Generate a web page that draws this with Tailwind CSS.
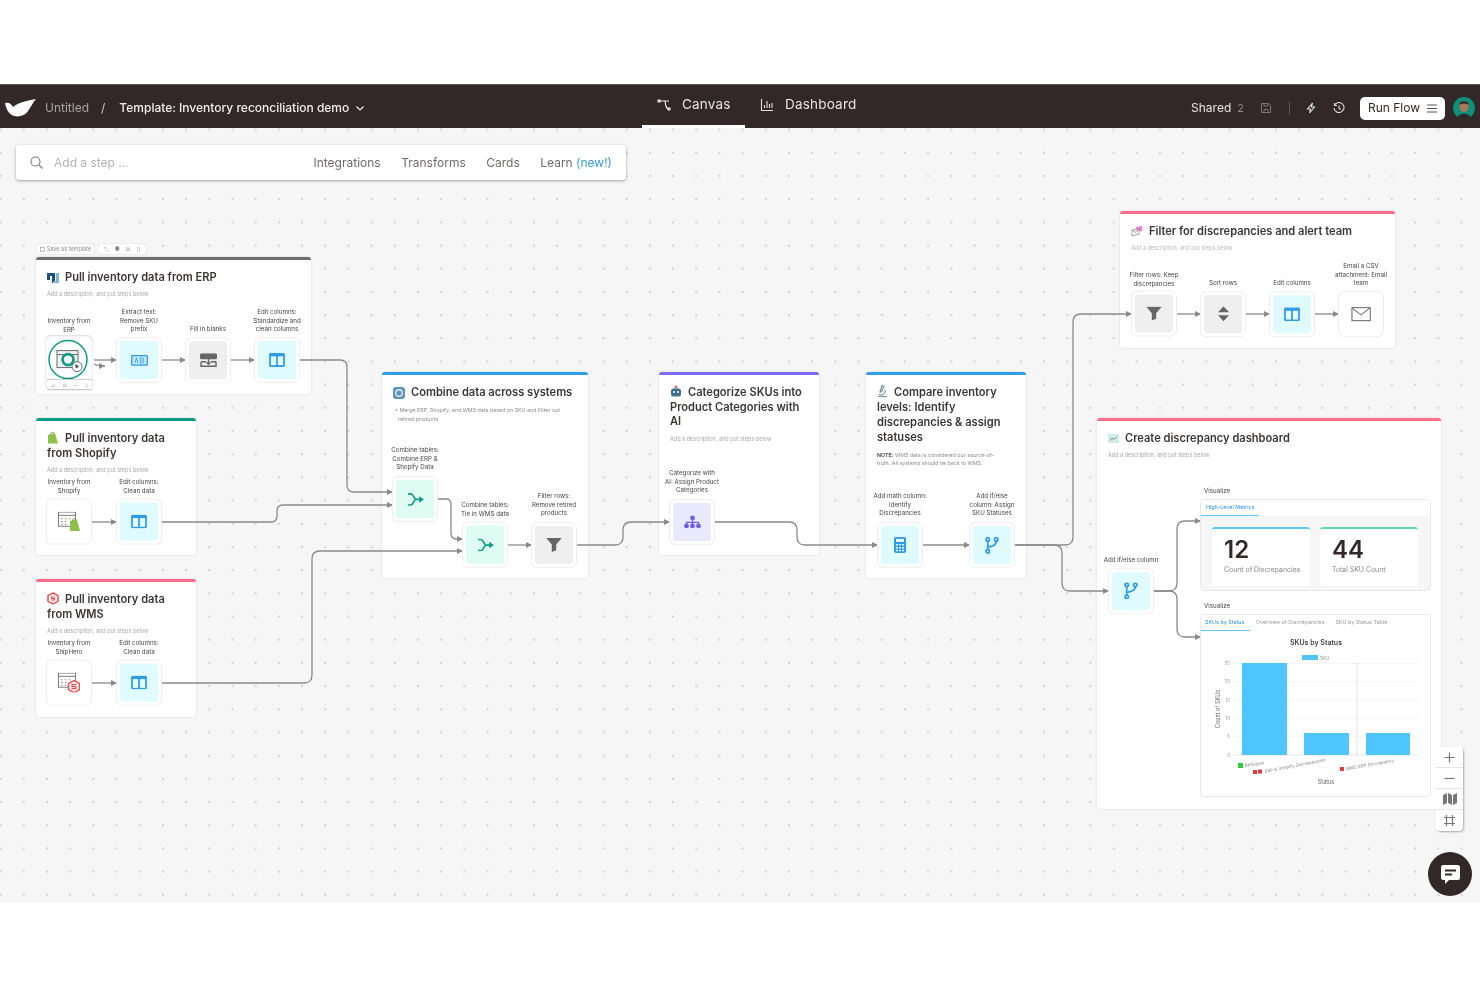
<!DOCTYPE html>
<html lang="en">
<head>
  <meta charset="UTF-8" />
  <meta name="viewport" content="width=device-width, initial-scale=1.0" />
  <title>Template: Inventory reconciliation demo</title>
  <script src="https://cdn.jsdelivr.net/npm/@tailwindcss/browser@4"></script>
</head>
<body class="bg-white font-[Inter,sans-serif] text-[#3d3535] overflow-hidden">
  <!-- shared icons -->
  <svg class="absolute w-0 h-0">
    <symbol id="cols" viewBox="0 0 18 16"><rect width="18" height="16" rx="2" fill="#2f9be6"/><rect x="2" y="4" width="6" height="10" fill="#e4fbff"/><rect x="10" y="4" width="6" height="10" fill="#e4fbff"/></symbol>
    <symbol id="funnel" viewBox="0 0 18 16"><path d="M0 0H18L11.5 7.5V14L6.5 16V7.5z" fill="#666"/></symbol>
    <symbol id="branch" viewBox="0 0 16 20"><g fill="none" stroke="#2f9be6" stroke-width="2"><circle cx="3" cy="3" r="2"/><circle cx="13" cy="3" r="2"/><circle cx="3" cy="17" r="2"/><path d="M3 5V15M13 5C13 10 8 11 3 12"/></g></symbol>
    <symbol id="merge" viewBox="0 0 18 14"><path d="M1 1H4C7 1 7 7 10 7H14M1 13H4C7 13 7 7 10 7" fill="none" stroke="#0d9b83" stroke-width="1.8"/><path d="M13 3.5L18 7L13 10.5z" fill="#0d9b83"/></symbol>
    <symbol id="sheet" viewBox="0 0 20 18"><g fill="none" stroke="#777" stroke-width="1"><rect x=".5" y=".5" width="18" height="15"/><path d="M.5 4H18.5"/></g><path d="M3 7h2v1H3zM7 7h2v1H7zM11 7h2v1h-2zM3 10h2v1H3zM7 10h2v1H7zM3 13h2v1H3zM7 13h2v1H7z" fill="#999"/></symbol>
  </svg>

  <div class="h-[84px] bg-white"></div>

  <!-- top bar -->
  <header class="h-[44px] bg-[#322828] relative flex items-center justify-between pl-[5px] pr-[5px] pt-[3px] border-t border-[#555] blur-[0.3px]">
    <div class="flex items-center w-[400px]">
      <svg class="w-[31px] h-[18px]" viewBox="0 0 31 18"><path d="M0 4C3 3 6 4 8 8C11 5 16 3 31 0C28 3 26 8 23 12C20 17 12 19 7 16C3 14 1 9 0 4z" fill="#fff"/></svg>
      <span class="ml-[9px] text-[12px] text-[#a8a3a3]">Untitled</span>
      <span class="ml-[12px] text-[12px] text-[#cfcaca]">/</span>
      <span class="ml-[14px] text-[12px] font-medium text-[#f1eeee] whitespace-nowrap">Template: Inventory reconciliation demo</span>
      <svg class="ml-[6px] w-[10px] h-[10px] shrink-0" viewBox="0 0 10 10"><path d="M1.5 3.5L5 7L8.5 3.5" fill="none" stroke="#eee" stroke-width="1.2"/></svg>
    </div>
    <nav class="absolute left-[642px] top-0 h-[43px] flex text-[13.5px] text-[#e8e4e4] tracking-[.2px]">
      <div class="w-[103px] h-full border-b-[3px] border-white flex items-center pl-[15px] gap-[11px] pb-[1px]">
        <svg class="w-[14px] h-[14px]" viewBox="0 0 14 14"><g fill="none" stroke="#eee" stroke-width="1.2"><path d="M2 3H7C9 3 8 6 9 8C9.5 10 10 11 12 11M7 3H12"/><circle cx="2" cy="3" r="1.2"/><circle cx="12" cy="11" r="1.2"/></g></svg>
        <span>Canvas</span>
      </div>
      <div class="flex items-center h-full pl-[15px] gap-[11px] pb-[4px]">
        <svg class="w-[14px] h-[14px]" viewBox="0 0 14 14"><path d="M1.5 1V12.5H13M4.5 10V7M7 10V3M9.5 10V6M12 10V5" fill="none" stroke="#ddd" stroke-width="1.1"/></svg>
        <span>Dashboard</span>
      </div>
    </nav>
    <div class="flex items-center text-[12px]">
      <span class="text-[#e8e4e4]">Shared</span>
      <span class="ml-[6px] text-[11px] text-[#8f8a8a]">2</span>
      <svg class="ml-[16px] w-[12px] h-[12px]" viewBox="0 0 12 12"><path d="M1.5 1.5H8.5L10.5 3.5V10.5H1.5zM4 1.5V4H8V1.5M4 10.5V7.5H8V10.5" fill="none" stroke="#777" stroke-width="1"/></svg>
      <span class="ml-[17px] w-px h-[13px] bg-[#5f5656]"></span>
      <svg class="ml-[15px] w-[12px] h-[12px]" viewBox="0 0 12 12"><path d="M7.5 1L2.5 7H5.5L4.5 11L9.5 5H6.5z" fill="none" stroke="#ddd" stroke-width="1.1"/></svg>
      <svg class="ml-[16px] w-[12px] h-[12px]" viewBox="0 0 12 12"><path d="M2 2.5A5 5 0 1 1 1 6M1.5 1V3.5H4M6 3.5V6.5L8 7.5" fill="none" stroke="#ddd" stroke-width="1.1"/></svg>
      <button class="ml-[15px] w-[85px] h-[23px] bg-white rounded-[5px] flex items-center justify-center gap-[7px] text-[#322828] text-[12px]">
        Run Flow
        <svg class="w-[10px] h-[9px]" viewBox="0 0 10 9"><path d="M0 1H10M0 4.5H10M0 8H10" stroke="#555" stroke-width="1"/></svg>
      </button>
      <svg class="ml-[8px] w-[22px] h-[22px]" viewBox="0 0 22 22"><circle cx="11" cy="11" r="11" fill="#0e8f7a"/><ellipse cx="11" cy="9.5" rx="4.5" ry="5.5" fill="#a9775c"/><path d="M6.5 8C6 3 16 3 15.5 8C13 6 9 6 6.5 8z" fill="#2a2320"/><path d="M4 22C5 15 17 15 18 22z" fill="#2b2b2b"/></svg>
    </div>
  </header>

  <!-- canvas -->
  <main class="relative h-[775px] overflow-hidden bg-[#f6f6f6] bg-[radial-gradient(circle,#d2d2d2_0.7px,transparent_1px)] bg-[size:23.2px_23.2px] bg-[position:-11px_-10px] blur-[0.3px]">

    <!-- add step bar -->
    <div class="absolute left-[16px] top-[17px] w-[610px] h-[35px] bg-white rounded-[3px] shadow-[0_1px_3px_rgba(0,0,0,.35)] flex items-center pl-[14px] pr-[14px] text-[12px] text-[#6f6a6a]">
      <svg class="w-[13px] h-[13px]" viewBox="0 0 13 13"><circle cx="5.5" cy="5.5" r="4.5" fill="none" stroke="#777" stroke-width="1.1"/><path d="M9 9L12.5 12.5" stroke="#777" stroke-width="1.1"/></svg>
      <span class="ml-[11px] text-[#b5b1b1]">Add a step ...</span>
      <div class="ml-auto flex gap-[20.5px]">
        <span>Integrations</span><span>Transforms</span><span>Cards</span>
        <span>Learn <span class="text-[#3b98dc]">(new!)</span></span>
      </div>
    </div>

    <!-- card toolbar -->
    <div class="absolute left-[37px] top-[116px] flex gap-[4px] text-[5.5px] text-[#8f8a8a]">
      <div class="h-[10px] w-[57px] bg-white rounded-[2px] shadow-[0_0_1px_rgba(0,0,0,.4)] flex items-center justify-center gap-[2px]">
        <svg class="w-[5px] h-[5px]" viewBox="0 0 5 5"><rect x=".4" y=".4" width="4.2" height="4.2" fill="none" stroke="#999" stroke-width=".6"/></svg>
        Save as template</div>
      <div class="h-[10px] w-[48px] bg-white rounded-[2px] shadow-[0_0_1px_rgba(0,0,0,.4)] flex items-center justify-around px-[3px]"><span>⤡</span><span>●</span><span>⧉</span><span>▯</span></div>
    </div>

    <!-- step cards -->
    <section class="absolute left-[36px] top-[129px] w-[275px] h-[137px] bg-white rounded-[3px] border-t-[3.5px] border-[#6e6e6e] shadow-[0_0_2px_rgba(0,0,0,.15)] px-[11px] pt-[10px]">
      <h3 class="text-[11.1px] leading-[15px] font-semibold flex items-center gap-[6px]">
        <svg class="w-[12px] h-[12px]" viewBox="0 0 12 12"><path d="M0 1H8V11H5V4H3V8H0z" fill="#1c4f7a"/><path d="M9 1H12V11H6V9H9z" fill="#7fb2d6"/></svg>
        Pull inventory data from ERP</h3>
      <p class="mt-[5px] text-[5.5px] leading-[8px] text-[#aaa]">Add a description, and put steps below</p>
    </section>

    <section class="absolute left-[36px] top-[290px] w-[160px] h-[137px] bg-white rounded-[3px] border-t-[3.5px] border-[#0d9b83] shadow-[0_0_2px_rgba(0,0,0,.15)] px-[11px] pt-[10px]">
      <h3 class="text-[11.1px] leading-[14.7px] font-semibold">
        <svg class="inline w-[12px] h-[13px] mr-[6px] align-[-2px]" viewBox="0 0 12 13"><path d="M1 4L8 2.5L11 12.5L1 12.5z" fill="#8dbf4b"/><path d="M3.5 4C3.5 1 7 0 7.5 3.5" fill="none" stroke="#6b9a38"/></svg>Pull inventory data from Shopify</h3>
      <p class="mt-[6px] text-[5.5px] leading-[8px] text-[#aaa]">Add a description, and put steps below</p>
    </section>

    <section class="absolute left-[36px] top-[451px] w-[160px] h-[138px] bg-white rounded-[3px] border-t-[3.5px] border-[#ff6b8a] shadow-[0_0_2px_rgba(0,0,0,.15)] px-[11px] pt-[10px]">
      <h3 class="text-[11.1px] leading-[14.7px] font-semibold">
        <svg class="inline w-[12px] h-[13px] mr-[6px] align-[-2px]" viewBox="0 0 12 13"><path d="M6 1L11 3.7V9.3L6 12L1 9.3V3.7z" fill="none" stroke="#ef4d4d" stroke-width="1.5"/><path d="M8 5H4.5V6.5H7.5V8H4" fill="none" stroke="#ef4d4d" stroke-width="1.1"/></svg>Pull inventory data from WMS</h3>
      <p class="mt-[6px] text-[5.5px] leading-[8px] text-[#aaa]">Add a description, and put steps below</p>
    </section>

    <section class="absolute left-[382px] top-[244px] w-[206px] h-[206px] bg-white rounded-[3px] border-t-[3.5px] border-[#2f9fe8] shadow-[0_0_2px_rgba(0,0,0,.15)] px-[11px] pt-[10px]">
      <h3 class="text-[11.1px] leading-[15px] font-semibold flex items-center gap-[6px]">
        <svg class="w-[12px] h-[12px]" viewBox="0 0 12 12"><rect width="12" height="12" rx="3" fill="#5f93b8"/><circle cx="6" cy="6" r="3.3" fill="none" stroke="#dcecf6" stroke-width="1.4"/></svg>
        Combine data across systems</h3>
      <p class="mt-[6px] pl-[2px] text-[5.3px] leading-[8.5px] text-[#8f8a8a] whitespace-nowrap">• Merge ERP, Shopify, and WMS data based on SKU and Filter out<br><span class="pl-[3px]">retired products</span></p>
    </section>

    <section class="absolute left-[659px] top-[244px] w-[160px] h-[183px] bg-white rounded-[3px] border-t-[3.5px] border-[#7c6cf0] shadow-[0_0_2px_rgba(0,0,0,.15)] px-[11px] pt-[10px]">
      <h3 class="text-[11.1px] leading-[14.7px] font-semibold">
        <svg class="inline w-[12px] h-[12px] mr-[6px] align-[-1px]" viewBox="0 0 12 12"><circle cx="6" cy="2" r="1.5" fill="#e0685a"/><rect x="1" y="3.5" width="10" height="8" rx="2.5" fill="#3f6f8c"/><circle cx="4" cy="7" r="1" fill="#fff"/><circle cx="8" cy="7" r="1" fill="#fff"/></svg>Categorize SKUs into Product Categories with AI</h3>
      <p class="mt-[6px] text-[5.5px] leading-[8px] text-[#aaa]">Add a description, and put steps below</p>
    </section>

    <section class="absolute left-[866px] top-[244px] w-[160px] h-[206px] bg-white rounded-[3px] border-t-[3.5px] border-[#2f9fe8] shadow-[0_0_2px_rgba(0,0,0,.15)] px-[11px] pt-[10px]">
      <h3 class="text-[11.1px] leading-[14.9px] font-semibold">
        <svg class="inline w-[11px] h-[12px] mr-[6px] align-[-1px]" viewBox="0 0 11 12"><path d="M5 .5L7 1.5L4.5 7H3zM1 11.5H10M2 9.5C4 10.5 9 10 8 5" fill="none" stroke="#7d8f9c" stroke-width="1.2"/></svg>Compare inventory levels: Identify discrepancies &amp; assign statuses</h3>
      <p class="mt-[6px] text-[5.3px] leading-[8.5px] text-[#8f8a8a] whitespace-nowrap"><b class="font-bold text-[#555]">NOTE:</b> WMS data is considered our source-of-<br>truth. All systems should tie back to WMS.</p>
    </section>

    <section class="absolute left-[1120px] top-[83px] w-[275px] h-[137px] bg-white rounded-[3px] border-t-[3.5px] border-[#ff6b8a] shadow-[0_0_2px_rgba(0,0,0,.15)] px-[11px] pt-[10px]">
      <h3 class="text-[11.1px] leading-[15px] font-semibold flex items-center gap-[6px]">
        <svg class="w-[12px] h-[11px]" viewBox="0 0 12 11"><path d="M5 1L11 0V5L6 6z" fill="#ff7ed4"/><path d="M1 4L8 2.5V8L1 10zM1 4L5 6.5L8 2.5" fill="#fff" stroke="#8a8a8a" stroke-width=".8"/></svg>
        Filter for discrepancies and alert team</h3>
      <p class="mt-[5px] text-[5.5px] leading-[8px] text-[#bbb]">Add a description, and put steps below</p>
    </section>

    <section class="absolute left-[1097px] top-[290px] w-[344px] h-[391px] bg-white rounded-[3px] border-t-[3.5px] border-[#ff6b8a] shadow-[0_0_2px_rgba(0,0,0,.15)] px-[11px] pt-[10px]">
      <h3 class="text-[11.1px] leading-[15px] font-semibold flex items-center gap-[6px]">
        <svg class="w-[11px] h-[9px]" viewBox="0 0 11 9"><rect width="11" height="9" fill="#cfeee8"/><path d="M2 6.5L4 4L6 5.5L9 2.5" fill="none" stroke="#777" stroke-width=".8"/></svg>
        Create discrepancy dashboard</h3>
      <p class="mt-[5px] text-[5.5px] leading-[8px] text-[#aaa]">Add a description, and put steps below</p>
    </section>

    <!-- connectors -->
    <svg class="absolute left-0 top-0 w-[1480px] h-[775px]" viewBox="0 0 1480 775" fill="none" stroke="#8a8a8a" stroke-width="1.3">
      <defs>
        <marker id="arrow" viewBox="0 0 6 6" refX="6" refY="3" markerWidth="6" markerHeight="6" markerUnits="userSpaceOnUse" orient="auto"><path d="M0 0L6 3L0 6z" fill="#8a8a8a" stroke="none"/></marker>
      </defs>
      <path marker-end="url(#arrow)" d="M300 232H340Q347 232 347 239V357Q347 364 354 364H393"/>
      <path marker-end="url(#arrow)" d="M162 394H271Q277 394 277 388V383Q277 377 283 377H393"/>
      <path marker-end="url(#arrow)" d="M162 555H304Q312 555 312 547V431Q312 423 320 423H463"/>
      <path marker-end="url(#arrow)" d="M438 371H446Q451 371 451 376V405Q451 411 456 411H463"/>
      <path marker-end="url(#arrow)" d="M508 417H532"/>
      <path marker-end="url(#arrow)" d="M577 417H615Q623 417 623 409V402Q623 394 631 394H670"/>
      <path marker-end="url(#arrow)" d="M715 394H789Q797 394 797 402V409Q797 417 805 417H878"/>
      <path marker-end="url(#arrow)" d="M923 417H970"/>
      <path marker-end="url(#arrow)" d="M1015 417H1065Q1073 417 1073 409V194Q1073 186 1081 186H1132"/>
      <path marker-end="url(#arrow)" d="M1015 417H1054Q1062 417 1062 425V455Q1062 463 1070 463H1109"/>
      <path marker-end="url(#arrow)" d="M1154 463H1169Q1177 463 1177 455V401Q1177 393 1185 393H1201"/>
      <path marker-end="url(#arrow)" d="M1154 463H1169Q1177 463 1177 471V501Q1177 509 1185 509H1201"/>
      <path marker-end="url(#arrow)" d="M94 232H117"/>
      <path marker-end="url(#arrow)" d="M94 236Q98 238 105 238"/>
      <path marker-end="url(#arrow)" d="M162 232H186"/>
      <path marker-end="url(#arrow)" d="M231 232H255"/>
      <path marker-end="url(#arrow)" d="M92 394H117"/>
      <path marker-end="url(#arrow)" d="M92 555H117"/>
      <path marker-end="url(#arrow)" d="M1177 186H1201"/>
      <path marker-end="url(#arrow)" d="M1246 186H1270"/>
      <path marker-end="url(#arrow)" d="M1315 186H1339"/>
    </svg>

    <!-- nodes: top is the bottom edge of the tile -->
    <div class="absolute left-[34px] top-[262px] -translate-y-full w-[70px] flex flex-col items-center text-center text-[6.2px] leading-[8.7px] text-[#444] whitespace-nowrap">
      <span class="mb-[2px]">Inventory from<br>ERP</span>
      <div class="relative w-[48px] h-[54px] bg-white rounded-[6px] border border-[#eee] shadow-[0_0_1px_rgba(0,0,0,.15)]">
        <svg class="absolute left-[1px] top-[2px] w-[42px] h-[42px]" viewBox="0 0 42 42">
          <circle cx="21" cy="21" r="19" fill="#fff" stroke="#0d9b83" stroke-width="1.5"/>
          <rect x="10" y="12" width="21" height="17" fill="#f3f3f3" stroke="#666"/>
          <path d="M10 16H31" stroke="#666"/>
          <circle cx="30" cy="28" r="5" fill="#fff" stroke="#666"/>
          <path d="M28 25.5L32 28L29 30z" fill="#444"/>
          <circle cx="21" cy="21" r="5.5" fill="none" stroke="#0d9b83" stroke-width="2.6"/>
        </svg>
        <div class="absolute left-[1px] bottom-[-1px] w-[45px] h-[10px] bg-white rounded-[2px] shadow-[0_0_1px_rgba(0,0,0,.4)] flex justify-around items-center text-[5px] text-[#999]"><span>▱</span><span>⧉</span><span>⌁</span><span>▯</span></div>
      </div>
    </div>

    <div class="absolute left-[104px] top-[255px] -translate-y-full w-[70px] flex flex-col items-center text-center text-[6.2px] leading-[8.7px] text-[#444] whitespace-nowrap">
      <span class="mb-[3px]">Extract text:<br>Remove SKU<br>prefix</span>
      <div class="w-[46px] h-[46px] bg-white rounded-[6px] border border-[#eee] p-[3px]"><div class="w-full h-full bg-[#e0fbff] rounded-[3px] flex items-center justify-center">
        <svg class="w-[17px] h-[11px]" viewBox="0 0 17 11"><rect x=".7" y=".7" width="15.6" height="9.6" rx="1" fill="#bfe9fb" stroke="#2f9be6" stroke-width="1.3"/><path d="M4 8L5.5 3L7 8M9.5 3V8H12C13 8 13 5.5 11.5 5.5C13 5.5 13 3 11.5 3z" fill="none" stroke="#2f9be6" stroke-width=".8"/></svg>
      </div></div>
    </div>

    <div class="absolute left-[173px] top-[255px] -translate-y-full w-[70px] flex flex-col items-center text-center text-[6.2px] leading-[8.7px] text-[#444] whitespace-nowrap">
      <span class="mb-[3px]">Fill in blanks</span>
      <div class="w-[46px] h-[46px] bg-white rounded-[6px] border border-[#eee] p-[3px]"><div class="w-full h-full bg-[#efefef] rounded-[3px] flex items-center justify-center">
        <svg class="w-[17px] h-[14px]" viewBox="0 0 17 14"><rect width="17" height="6" rx="1.5" fill="#666"/><path d="M1 8.5H6M11 8.5H16M1 8.5V13H16V8.5M8.5 5V11M6.5 9L8.5 11L10.5 9" fill="none" stroke="#666" stroke-width="1.4"/></svg>
      </div></div>
    </div>

    <div class="absolute left-[242px] top-[255px] -translate-y-full w-[70px] flex flex-col items-center text-center text-[6.2px] leading-[8.7px] text-[#444] whitespace-nowrap">
      <span class="mb-[3px]">Edit columns:<br>Standardize and<br>clean columns</span>
      <div class="w-[46px] h-[46px] bg-white rounded-[6px] border border-[#eee] p-[3px]"><div class="w-full h-full bg-[#e0fbff] rounded-[3px] flex items-center justify-center"><svg class="w-[16px] h-[14px]"><use href="#cols"/></svg></div></div>
    </div>

    <div class="absolute left-[34px] top-[417px] -translate-y-full w-[70px] flex flex-col items-center text-center text-[6.2px] leading-[8.7px] text-[#444] whitespace-nowrap">
      <span class="mb-[4px]">Inventory from<br>Shopify</span>
      <div class="w-[46px] h-[46px] bg-white rounded-[6px] border border-[#eee] flex items-center justify-center">
        <svg class="w-[22px] h-[20px]" viewBox="0 0 22 20"><use href="#sheet" width="19" height="17"/><path d="M12 9.5L19 8L22 19.5H12z" fill="#8dbf4b"/><path d="M14.5 9.5C14.5 6.5 18 6 18 8.5" fill="none" stroke="#6b9a38"/></svg>
      </div>
    </div>

    <div class="absolute left-[104px] top-[417px] -translate-y-full w-[70px] flex flex-col items-center text-center text-[6.2px] leading-[8.7px] text-[#444] whitespace-nowrap">
      <span class="mb-[4px]">Edit columns:<br>Clean data</span>
      <div class="w-[46px] h-[46px] bg-white rounded-[6px] border border-[#eee] p-[3px]"><div class="w-full h-full bg-[#e0fbff] rounded-[3px] flex items-center justify-center"><svg class="w-[16px] h-[14px]"><use href="#cols"/></svg></div></div>
    </div>

    <div class="absolute left-[34px] top-[578px] -translate-y-full w-[70px] flex flex-col items-center text-center text-[6.2px] leading-[8.7px] text-[#444] whitespace-nowrap">
      <span class="mb-[4px]">Inventory from<br>ShipHero</span>
      <div class="w-[46px] h-[46px] bg-white rounded-[6px] border border-[#eee] flex items-center justify-center">
        <svg class="w-[22px] h-[20px]" viewBox="0 0 22 20"><use href="#sheet" width="19" height="17"/><path d="M16 8L21.5 11V17L16 20L10.5 17V11z" fill="#fff" stroke="#ef4d4d" stroke-width="1.5"/><path d="M18.5 12H14V14H18V16H13.5" fill="none" stroke="#ef4d4d" stroke-width="1.2"/></svg>
      </div>
    </div>

    <div class="absolute left-[104px] top-[578px] -translate-y-full w-[70px] flex flex-col items-center text-center text-[6.2px] leading-[8.7px] text-[#444] whitespace-nowrap">
      <span class="mb-[4px]">Edit columns:<br>Clean data</span>
      <div class="w-[46px] h-[46px] bg-white rounded-[6px] border border-[#eee] p-[3px]"><div class="w-full h-full bg-[#e0fbff] rounded-[3px] flex items-center justify-center"><svg class="w-[16px] h-[14px]"><use href="#cols"/></svg></div></div>
    </div>

    <div class="absolute left-[380px] top-[394px] -translate-y-full w-[70px] flex flex-col items-center text-center text-[6.2px] leading-[8.7px] text-[#444] whitespace-nowrap">
      <span class="mb-[4px]">Combine tables:<br>Combine ERP &amp;<br>Shopify Data</span>
      <div class="w-[46px] h-[46px] bg-white rounded-[6px] border border-[#eee] p-[3px]"><div class="w-full h-full bg-[#defcf2] rounded-[3px] flex items-center justify-center"><svg class="w-[17px] h-[13px]"><use href="#merge"/></svg></div></div>
    </div>

    <div class="absolute left-[450px] top-[440px] -translate-y-full w-[70px] flex flex-col items-center text-center text-[6.2px] leading-[8.7px] text-[#444] whitespace-nowrap">
      <span class="mb-[4px]">Combine tables:<br>Tie in WMS data</span>
      <div class="w-[46px] h-[46px] bg-white rounded-[6px] border border-[#eee] p-[3px]"><div class="w-full h-full bg-[#defcf2] rounded-[3px] flex items-center justify-center"><svg class="w-[17px] h-[13px]"><use href="#merge"/></svg></div></div>
    </div>

    <div class="absolute left-[519px] top-[440px] -translate-y-full w-[70px] flex flex-col items-center text-center text-[6.2px] leading-[8.7px] text-[#444] whitespace-nowrap">
      <span class="mb-[4px]">Filter rows:<br>Remove retired<br>products</span>
      <div class="w-[46px] h-[46px] bg-white rounded-[6px] border border-[#eee] p-[3px]"><div class="w-full h-full bg-[#efefef] rounded-[3px] flex items-center justify-center"><svg class="w-[16px] h-[14px]"><use href="#funnel"/></svg></div></div>
    </div>

    <div class="absolute left-[657px] top-[417px] -translate-y-full w-[70px] flex flex-col items-center text-center text-[6.2px] leading-[8.7px] text-[#444] whitespace-nowrap">
      <span class="mb-[4px]">Categorize with<br>AI: Assign Product<br>Categories</span>
      <div class="w-[46px] h-[46px] bg-white rounded-[6px] border border-[#eee] p-[3px]"><div class="w-full h-full bg-[#eaeaff] rounded-[3px] flex items-center justify-center">
        <svg class="w-[17px] h-[14px]" viewBox="0 0 17 14"><g fill="#6d5fe8"><circle cx="8.5" cy="3" r="2.4"/><circle cx="2.5" cy="11" r="2.4"/><circle cx="8.5" cy="11" r="2.4"/><circle cx="14.5" cy="11" r="2.4"/></g><path d="M8.5 3V11M2.5 11V7.5H14.5V11" fill="none" stroke="#6d5fe8" stroke-width="1.2"/></svg>
      </div></div>
    </div>

    <div class="absolute left-[865px] top-[440px] -translate-y-full w-[70px] flex flex-col items-center text-center text-[6.2px] leading-[8.7px] text-[#444] whitespace-nowrap">
      <span class="mb-[4px]">Add math column:<br>Identify<br>Discrepancies</span>
      <div class="w-[46px] h-[46px] bg-white rounded-[6px] border border-[#eee] p-[3px]"><div class="w-full h-full bg-[#e0fbff] rounded-[3px] flex items-center justify-center">
        <svg class="w-[12px] h-[16px]" viewBox="0 0 12 16"><rect width="12" height="16" rx="2" fill="#2f9be6"/><rect x="2" y="2" width="8" height="3" fill="#e4fbff"/><path d="M2 7h2v1.5H2zM5 7h2v1.5H5zM8 7h2v1.5H8zM2 10h2v1.5H2zM5 10h2v1.5H5zM8 10h2v1.5H8zM2 12.8h2v1.5H2zM5 12.8h2v1.5H5zM8 12.8h2v1.5H8z" fill="#e4fbff"/></svg>
      </div></div>
    </div>

    <div class="absolute left-[957px] top-[440px] -translate-y-full w-[70px] flex flex-col items-center text-center text-[6.2px] leading-[8.7px] text-[#444] whitespace-nowrap">
      <span class="mb-[4px]">Add if/else<br>column: Assign<br>SKU Statuses</span>
      <div class="w-[46px] h-[46px] bg-white rounded-[6px] border border-[#eee] p-[3px]"><div class="w-full h-full bg-[#e0fbff] rounded-[3px] flex items-center justify-center"><svg class="w-[14px] h-[17px]"><use href="#branch"/></svg></div></div>
    </div>

    <div class="absolute left-[1119px] top-[209px] -translate-y-full w-[70px] flex flex-col items-center text-center text-[6.2px] leading-[8.7px] text-[#444] whitespace-nowrap">
      <span class="mb-[3px]">Filter rows: Keep<br>discrepancies</span>
      <div class="w-[46px] h-[46px] bg-white rounded-[6px] border border-[#eee] p-[3px]"><div class="w-full h-full bg-[#efefef] rounded-[3px] flex items-center justify-center"><svg class="w-[16px] h-[14px]"><use href="#funnel"/></svg></div></div>
    </div>

    <div class="absolute left-[1188px] top-[209px] -translate-y-full w-[70px] flex flex-col items-center text-center text-[6.2px] leading-[8.7px] text-[#444] whitespace-nowrap">
      <span class="mb-[3px]">Sort rows</span>
      <div class="w-[46px] h-[46px] bg-white rounded-[6px] border border-[#eee] p-[3px]"><div class="w-full h-full bg-[#efefef] rounded-[3px] flex items-center justify-center">
        <svg class="w-[11px] h-[15px]" viewBox="0 0 11 15"><path d="M5.5 0L11 6H0zM5.5 15L0 9H11z" fill="#666"/></svg>
      </div></div>
    </div>

    <div class="absolute left-[1257px] top-[209px] -translate-y-full w-[70px] flex flex-col items-center text-center text-[6.2px] leading-[8.7px] text-[#444] whitespace-nowrap">
      <span class="mb-[3px]">Edit columns</span>
      <div class="w-[46px] h-[46px] bg-white rounded-[6px] border border-[#eee] p-[3px]"><div class="w-full h-full bg-[#e0fbff] rounded-[3px] flex items-center justify-center"><svg class="w-[16px] h-[14px]"><use href="#cols"/></svg></div></div>
    </div>

    <div class="absolute left-[1326px] top-[209px] -translate-y-full w-[70px] flex flex-col items-center text-center text-[6.2px] leading-[8.7px] text-[#444] whitespace-nowrap">
      <span class="mb-[3px]">Email a CSV<br>attachment: Email<br>team</span>
      <div class="w-[46px] h-[46px] bg-white rounded-[6px] border border-[#eee] flex items-center justify-center">
        <svg class="w-[20px] h-[15px]" viewBox="0 0 20 15"><rect x="0" y="1.5" width="19" height="13" fill="#ffd2f0"/><rect x="1" y=".7" width="18.3" height="13" fill="#fff" stroke="#777" stroke-width="1.1"/><path d="M1 1L10 8L19 1" fill="none" stroke="#777" stroke-width="1.1"/></svg>
      </div>
    </div>

    <div class="absolute left-[1096px] top-[486px] -translate-y-full w-[70px] flex flex-col items-center text-center text-[6.2px] leading-[8.7px] text-[#444] whitespace-nowrap">
      <span class="mb-[3px]">Add if/else column</span>
      <div class="w-[46px] h-[46px] bg-white rounded-[6px] border border-[#eee] p-[3px]"><div class="w-full h-full bg-[#e0fbff] rounded-[3px] flex items-center justify-center"><svg class="w-[14px] h-[17px]"><use href="#branch"/></svg></div></div>
    </div>

    <!-- metrics panel -->
    <span class="absolute left-[1204px] top-[359px] text-[6.2px] leading-[8px] text-[#444]">Visualize</span>
    <div class="absolute left-[1200px] top-[371px] w-[231px] h-[92px] bg-[#f6f6f6] rounded-[4px] border border-[#e8e8e8] overflow-hidden">
      <div class="flex h-[16px] bg-white">
        <span class="w-[58px] border-b border-[#5cc8ff] pl-[5px] text-[5.4px] leading-[14px] text-[#2f8fe0]">High-Level Metrics</span>
      </div>
      <div class="flex gap-[10px] px-[11px] pt-[11px]">
        <div class="w-[98px] h-[59px] bg-white rounded-[3px] border-t-[2.5px] border-[#5cc8ff] pl-[12px] pt-[9px]">
          <p class="text-[24px] leading-[24px] font-semibold text-[#322828]">12</p>
          <p class="mt-[3px] text-[6.9px] leading-[9px] text-[#8a8585]">Count of Discrepancies</p>
        </div>
        <div class="w-[98px] h-[59px] bg-white rounded-[3px] border-t-[2.5px] border-[#5edcb0] pl-[12px] pt-[9px]">
          <p class="text-[24px] leading-[24px] font-semibold text-[#322828]">44</p>
          <p class="mt-[3px] text-[6.9px] leading-[9px] text-[#8a8585]">Total SKU Count</p>
        </div>
      </div>
    </div>

    <!-- chart panel -->
    <span class="absolute left-[1204px] top-[474px] text-[6.2px] leading-[8px] text-[#444]">Visualize</span>
    <div class="absolute left-[1200px] top-[486px] w-[231px] h-[183px] bg-white rounded-[4px] border border-[#e8e8e8] overflow-hidden">
      <div class="flex h-[16px] text-[5.4px] leading-[14px] text-[#999]">
        <span class="w-[49px] pl-[4px] border-b border-[#5cc8ff] text-[#2f8fe0]">SKUs by Status</span>
        <span class="ml-[6px]">Overview of Discrepancies</span>
        <span class="ml-[11px]">SKU by Status Table</span>
      </div>
      <svg class="absolute left-0 top-0 w-[231px] h-[183px]" viewBox="1200 614 231 183" fill="#777" font-size="5">
        <text x="1315" y="644" text-anchor="middle" font-size="7" font-weight="600" fill="#444">SKUs by Status</text>
        <rect x="1301" y="654" width="16" height="5" fill="#4fc6ff"/>
        <text x="1319" y="658.5" font-size="4.5" fill="#999">SKU</text>
        <path d="M1232 662.5H1418M1232 680.5H1418M1232 699H1418M1232 717H1418M1232 735.5H1418" stroke="#f0f0f0" stroke-width=".7"/>
        <path d="M1232 754H1418" stroke="#ddd" stroke-width=".7"/>
        <path d="M1356 662V756" stroke="#d5d5d5" stroke-width=".7"/>
        <rect x="1241" y="662" width="45" height="92" fill="#4fc6ff"/>
        <rect x="1303" y="732" width="45" height="22" fill="#4fc6ff"/>
        <rect x="1365" y="732" width="44" height="22" fill="#4fc6ff"/>
        <g font-size="4.5" fill="#999" text-anchor="end">
          <text x="1229" y="664">25</text><text x="1229" y="682">20</text><text x="1229" y="700.5">15</text><text x="1229" y="719">10</text><text x="1229" y="737">5</text><text x="1229" y="756">0</text>
        </g>
        <text transform="translate(1219 708) rotate(-90)" text-anchor="middle" font-size="5.5" fill="#666">Count of SKUs</text>
        <rect x="1237" y="762" width="5" height="5" fill="#2ecc40"/>
        <text transform="translate(1244 766) rotate(-8)" font-size="4.5" fill="#888">Reflusive</text>
        <rect x="1252" y="769" width="4" height="4" fill="#e23b3b"/><rect x="1257" y="768.5" width="4" height="4" fill="#e23b3b"/>
        <text transform="translate(1264 772) rotate(-11)" font-size="4.5" fill="#888">ERP &amp; Shopify Discrepancies</text>
        <rect x="1339" y="766" width="4" height="4" fill="#e23b3b"/>
        <text transform="translate(1345 769.5) rotate(-10)" font-size="4.5" fill="#888">WMS ERP Discrepancy</text>
        <text x="1325" y="783" text-anchor="middle" font-size="5.5" fill="#666">Status</text>
      </svg>
    </div>

    <!-- zoom controls -->
    <div class="absolute left-[1436px] top-[619px] w-[27px] h-[84px] bg-white rounded-[4px] shadow-[1px_1px_2px_rgba(0,0,0,.3)] flex flex-col divide-y divide-[#e5e5e5]">
      <div class="h-[21px] flex items-center justify-center"><svg class="w-[11px] h-[11px]" viewBox="0 0 11 11"><path d="M5.5 .5V10.5M.5 5.5H10.5" stroke="#777" stroke-width="1.2"/></svg></div>
      <div class="h-[21px] flex items-center justify-center"><svg class="w-[11px] h-[11px]" viewBox="0 0 11 11"><path d="M.5 5.5H10.5" stroke="#777" stroke-width="1.2"/></svg></div>
      <div class="h-[21px] flex items-center justify-center"><svg class="w-[14px] h-[12px]" viewBox="0 0 14 12"><path d="M0 2L4 0V10L0 12zM5 0L9 2V12L5 10zM10 2L14 0V10L10 12z" fill="#777"/></svg></div>
      <div class="h-[21px] flex items-center justify-center"><svg class="w-[11px] h-[11px]" viewBox="0 0 11 11"><path d="M2.5 0V11M8.5 0V11M0 2.5H11M0 8.5H11" stroke="#777" stroke-width="1.2" fill="none"/></svg></div>
    </div>

    <!-- chat -->
    <div class="absolute left-[1428px] top-[724px] w-[44px] h-[44px] rounded-full bg-[#322828] flex items-center justify-center">
      <svg class="w-[21px] h-[21px]" viewBox="0 0 21 21"><path d="M3 1H18C19 1 20 2 20 3V14C20 15 19 16 18 16H9L5 20V16H3C2 16 1 15 1 14V3C1 2 2 1 3 1z" fill="#fff"/><path d="M5 6.5H16M5 10.5H12" stroke="#322828" stroke-width="1.8"/></svg>
    </div>
  </main>
</body>
</html>
